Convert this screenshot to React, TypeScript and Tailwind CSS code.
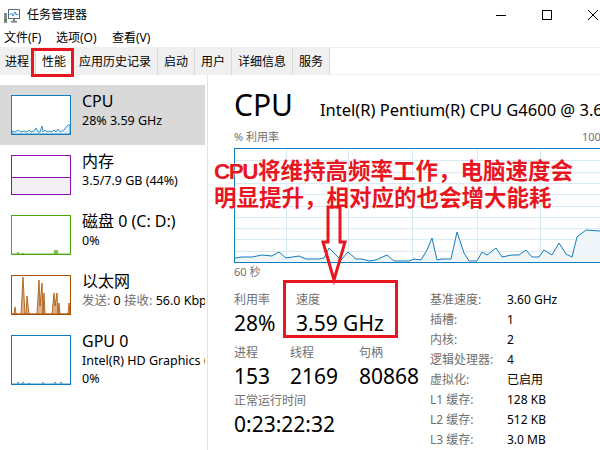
import React from "react";

function AppIcon() {
  return (
    <svg width="17" height="16" viewBox="0 0 17 16">
      <rect x="1" y="5" width="3" height="10" fill="#8a8a8a" />
      <rect x="1.5" y="11" width="2" height="2" fill="#2c9b2c" />
      <rect x="5.5" y="1.5" width="11" height="9" fill="#ffffff" stroke="#5a6a7a" />
      <polyline points="6.5,7 8.5,5 10,8 12,4 13.5,7 15.5,6" fill="none" stroke="#2a8ad6" strokeWidth="1" />
      <rect x="10" y="11" width="2" height="2" fill="#7a7a7a" />
      <rect x="8" y="13" width="6" height="1.5" fill="#7a7a7a" />
    </svg>
  );
}

function Thumb({
  color,
  h = 40,
  children,
}: {
  color: string;
  h?: number;
  children?: React.ReactNode;
}) {
  return (
    <div
      className="w-[60px] shrink-0 border bg-white relative"
      style={{ borderColor: color, height: h }}
    >
      <svg
        width="58"
        height={h - 2}
        viewBox={`0 0 58 ${h - 2}`}
        className="absolute left-0 top-0"
      >
        {children}
      </svg>
    </div>
  );
}

function SideItem({
  selected,
  thumb,
  title,
  lines,
  h = 60,
}: {
  selected?: boolean;
  thumb: React.ReactNode;
  title: string;
  lines: React.ReactNode[];
  h?: number;
}) {
  return (
    <div
      className={`flex pl-[11px] ${selected ? "bg-[#d9d9d9]" : ""}`}
      style={{ height: h }}
    >
      <div className="mt-[10px]">{thumb}</div>
      <div className="ml-[11px] mt-[6px] flex flex-col whitespace-nowrap">
        <div className="text-[16px] leading-[21px] text-black">{title}</div>
        {lines.map((l, i) => (
          <div key={i} className="text-[12.5px] leading-[18px] text-black">
            {l}
          </div>
        ))}
      </div>
    </div>
  );
}

const chartPts: [number, number][] = [
  [0, 109], [7, 108], [17, 108], [27, 106], [37, 107], [44, 103], [51, 109],
  [64, 107], [71, 110], [84, 110], [89, 109], [94, 99], [106, 111], [113, 103],
  [121, 110], [127, 110], [134, 112], [141, 111], [152, 106], [159, 112],
  [174, 112], [179, 110], [186, 111], [192, 101], [197, 89], [202, 111],
  [207, 110], [216, 110], [222, 83], [229, 104], [234, 112], [242, 112],
  [247, 103], [252, 106], [261, 99], [267, 108], [277, 106], [284, 106],
  [291, 101], [297, 108], [304, 108], [309, 101], [317, 106], [324, 94],
  [331, 105], [337, 108], [342, 88], [351, 81], [365, 82], [374, 82],
];

function CpuChart() {
  const W = 374;
  const line = chartPts.map((p) => p.join(",")).join(" ");
  const area = `0,113 ${line} ${W},113`;
  const vx = [51, 113, 177, 242, 305, 368];
  const hy = Array.from({ length: 9 }, (_, i) => Math.round(((i + 1) * 113) / 10) + 0.5);
  return (
    <div className="w-[376px] h-[115px] border border-[#117dbb] relative bg-white">
      <svg width={W} height="113" viewBox={`0 0 ${W} 113`} className="absolute left-0 top-0">
        {vx.map((x) => (
          <line key={x} x1={x + 0.5} y1="0" x2={x + 0.5} y2="113" stroke="#d9eaf4" />
        ))}
        {hy.map((y) => (
          <line key={y} x1="0" y1={y} x2={W} y2={y} stroke="#d9eaf4" />
        ))}
        <polygon points={area} fill="#f1f6fa" />
        <polyline points={line} fill="none" stroke="#117dbb" strokeWidth="1" />
      </svg>
    </div>
  );
}

function Tab({ label, selected, first }: { label: string; selected?: boolean; first?: boolean }) {
  return (
    <div
      className={`h-[27px] ${first ? "pl-[5px] pr-[6px]" : "px-[6px]"} flex items-center border-r border-[#d9d9d9] text-[12px] ${
        selected ? "bg-white" : "bg-[#f0f0f0]"
      }`}
    >
      {label}
    </div>
  );
}

function Stat({ label, value, w }: { label: string; value: string; w: number }) {
  return (
    <div className="flex flex-col whitespace-nowrap" style={{ width: w }}>
      <div className="text-[12px] leading-[16px] text-[#707070]">{label}</div>
      <div className="text-[21px] leading-[30px] text-black">{value}</div>
    </div>
  );
}

const specs: [string, string][] = [
  ["基准速度:", "3.60 GHz"],
  ["插槽:", "1"],
  ["内核:", "2"],
  ["逻辑处理器:", "4"],
  ["虚拟化:", "已启用"],
  ["L1 缓存:", "128 KB"],
  ["L2 缓存:", "512 KB"],
  ["L3 缓存:", "3.0 MB"],
];

export default function App() {
  return (
    <div className="relative w-[600px] h-[450px] overflow-hidden bg-white text-black font-['Noto_Sans','Noto_Sans_CJK_SC',sans-serif]">
      <div className="w-[616px] flex flex-col">
        {/* Title bar */}
        <div className="h-[30px] flex items-center">
          <div className="ml-[3px] mt-[1px]">
            <AppIcon />
          </div>
          <span className="ml-[7px] text-[12px]">任务管理器</span>
          <div className="flex-1" />
          <div className="flex h-full">
            <div className="w-[46px] flex items-center justify-center">
              <div className="w-[10px] h-[1px] bg-black" />
            </div>
            <div className="w-[46px] flex items-center justify-center">
              <div className="w-[10px] h-[10px] border border-black" />
            </div>
            <div className="w-[46px] flex items-center justify-center">
              <svg width="10" height="10" viewBox="0 0 10 10">
                <path d="M0 0L10 10M10 0L0 10" stroke="black" strokeWidth="1" />
              </svg>
            </div>
          </div>
        </div>
        {/* Menu */}
        <div className="h-[16px] flex items-center text-[12px] pl-[4px]">
          <span className="w-[52px]">文件(F)</span>
          <span className="w-[56px]">选项(O)</span>
          <span>查看(V)</span>
        </div>
        {/* Tabs */}
        <div className="mt-[1px] border-t border-[#f0f0f0] h-[28px] flex border-b border-[#d9d9d9]">
          <Tab label="进程" first />
          <Tab label="性能" selected />
          <Tab label="应用历史记录" />
          <Tab label="启动" />
          <Tab label="用户" />
          <Tab label="详细信息" />
          <Tab label="服务" />
        </div>
        {/* Body */}
        <div className="flex">
          {/* Sidebar */}
          <div className="w-[208px] shrink-0 pt-[10px] border-r border-[#e3e3e3] h-[376px] pr-[2px]">
            <div className="w-[205px] overflow-hidden">
              <SideItem
                selected
                title="CPU"
                lines={["28% 3.59 GHz"]}
                thumb={
                  <Thumb color="#117dbb">
                    <polygon
                      points="0,38 0,35 3,36 6,34 9,36 12,35 15,36 17,34 19,36 22,35 24,32 26,36 28,36 30,30 31,36 33,34 35,36 37,35 40,36 42,34 44,36 46,33 48,36 50,35 52,34 54,31 56,29 58,29 58,38"
                      fill="#e4eff7"
                      stroke="#117dbb"
                      strokeWidth="0.8"
                    />
                  </Thumb>
                }
              />
              <SideItem
                title="内存"
                lines={["3.5/7.9 GB (44%)"]}
                thumb={
                  <Thumb color="#8b12ae">
                    <rect x="0" y="21.5" width="58" height="17" fill="#f1eff4" />
                    <line x1="0" y1="21.5" x2="58" y2="21.5" stroke="#8b12ae" strokeWidth="1" />
                  </Thumb>
                }
              />
              <SideItem
                title="磁盘 0 (C: D:)"
                lines={["0%"]}
                thumb={
                  <Thumb color="#4da60c">
                    <polyline
                      points="0,38 5,38 6,36 7,38 10,38 11,37 12,38 42,38 43,34 44,38 45,34 46,38 58,38"
                      fill="#c9e5b4"
                      stroke="#4da60c"
                      strokeWidth="0.8"
                    />
                  </Thumb>
                }
              />
              <SideItem
                title="以太网"
                lines={[
                  <span key="n">
                    <span className="text-[#707070]">发送:</span> 0{" "}
                    <span className="text-[#707070]">接收:</span> 56.0 Kbps
                  </span>,
                ]}
                thumb={
                  <Thumb color="#a74f01">
                    <polygon
                      points="0,38 2,38 3,31 4,38 9,38 11,1 13,38 14,38 15,20 17,38 25,38 27,4 28,30 30,7 31,38 32,17 33,38 40,38 42,17 43,30 45,17 46,38 47,27 48,38 56,38 57,27 58,38"
                      fill="#dcb08a"
                      stroke="#a74f01"
                      strokeWidth="0.8"
                    />
                  </Thumb>
                }
              />
              <SideItem
                title="GPU 0"
                h={70}
                lines={["Intel(R) HD Graphics 630", "0%"]}
                thumb={
                  <Thumb color="#117dbb" h={50}>
                    <polyline
                      points="0,48 5,48 6,46 7,48 10,48 11,46 12,48 16,48 17,47 18,48 30,48 31,46 32,48 42,48 43,46 44,48 48,48 49,46 50,48 58,48"
                      fill="none"
                      stroke="#117dbb"
                      strokeWidth="0.8"
                    />
                  </Thumb>
                }
              />
            </div>
          </div>
          {/* Main */}
          <div className="flex-1 pl-[26px] pt-[12px] flex flex-col whitespace-nowrap">
            <div className="flex items-baseline h-[36px]">
              <span className="text-[30px] leading-[36px] w-[86px]">CPU</span>
              <span className="text-[16.5px]">Intel(R) Pentium(R) CPU G4600 @ 3.60GHz</span>
            </div>
            <div className="mt-[7px] w-[376px] flex justify-between text-[11px] leading-[14px] text-[#707070]">
              <span>% 利用率</span>
              <span>100%</span>
            </div>
            <div className="mt-[4px]">
              <CpuChart />
            </div>
            <div className="mt-[2px] text-[11px] leading-[14px] text-[#707070]">60 秒</div>
            <div className="mt-[13px] flex">
              <div className="w-[196px] flex flex-col">
                <div className="flex">
                  <Stat label="利用率" value="28%" w={62} />
                  <Stat label="速度" value="3.59 GHz" w={120} />
                </div>
                <div className="flex mt-[7px]">
                  <Stat label="进程" value="153" w={56} />
                  <Stat label="线程" value="2169" w={69} />
                  <Stat label="句柄" value="80868" w={70} />
                </div>
                <div className="flex mt-[2px]">
                  <Stat label="正常运行时间" value="0:23:22:32" w={150} />
                </div>
              </div>
              <div className="flex flex-col -mt-[2px]">
                {specs.map(([k, v]) => (
                  <div key={k} className="flex h-[20px] items-center text-[12px]">
                    <span className="w-[77px] text-[#707070]">{k}</span>
                    <span className="text-black">{v}</span>
                  </div>
                ))}
              </div>
            </div>
          </div>
        </div>
      </div>

      {/* Annotations */}
      <div className="absolute left-[31px] top-[48px] w-[43px] h-[29px] border-[3px] border-[#e8161f]" />
      <div className="absolute left-[283px] top-[280px] w-[115px] h-[58px] border-[3px] border-[#e8161f]" />
      <div className="absolute left-[214px] top-[157px] font-['Noto_Sans_CJK_SC',sans-serif] font-bold text-[22.5px] leading-[24px] text-[#e8161f] whitespace-nowrap [text-shadow:0_0_2px_#fff]">
        <div>
          <span className="font-['Liberation_Sans',sans-serif] tracking-[-1.5px] mr-[1px]">CPU</span>将维持高频率工作，电脑速度会
        </div>
        <div>明显提升，相对应的也会增大能耗</div>
      </div>
      <svg className="absolute left-[318px] top-[203px]" width="32" height="82" viewBox="0 0 32 82">
        <polygon
          points="10,4 22,4 22,39 27,39 16,77 5,39 10,39"
          fill="none"
          stroke="#e8161f"
          strokeWidth="3"
        />
      </svg>
    </div>
  );
}
